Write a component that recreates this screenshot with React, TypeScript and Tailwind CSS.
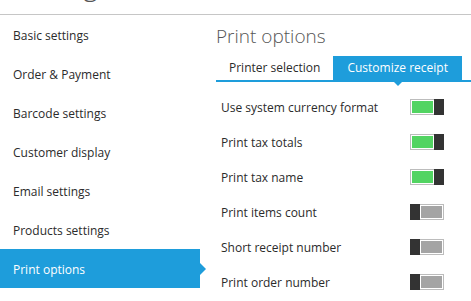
import React from "react";

const menu = [
  "Basic settings",
  "Order & Payment",
  "Barcode settings",
  "Customer display",
  "Email settings",
  "Products settings",
  "Print options",
];

const options = [
  { label: "Use system currency format", on: true },
  { label: "Print tax totals", on: true },
  { label: "Print tax name", on: true },
  { label: "Print items count", on: false },
  { label: "Short receipt number", on: false },
  { label: "Print order number", on: false },
];

function Toggle({ on }: { on: boolean }) {
  if (on) {
    return (
      <div className="flex h-[16px] w-[34px]">
        <div className="flex-1 border border-[#bcbcbc] border-r-0 bg-white p-[1px]">
          <div className="h-full w-full bg-[#52d462]" />
        </div>
        <div className="w-[10px] bg-[#333333]" />
      </div>
    );
  }
  return (
    <div className="flex h-[16px] w-[34px]">
      <div className="w-[10px] bg-[#333333]" />
      <div className="flex-1 border border-[#bcbcbc] border-l-0 bg-white p-[1px]">
        <div className="h-full w-full bg-[#a4a4a4]" />
      </div>
    </div>
  );
}

export default function App() {
  return (
    <div className="h-[301px] w-[471px] overflow-hidden bg-white text-[#2b2b2b] [font-family:'Open_Sans',sans-serif]">
      {/* Header, mostly scrolled off */}
      <div className="h-[15px] overflow-hidden border-b border-[#c6c6c6]">
        <div className="-mt-[34px] pl-[11px] text-[28px] font-light leading-[36px] text-[#555]">Settings</div>
      </div>

      <div className="flex">
        {/* Sidebar */}
        <div className="w-[200px] shrink-0">
          {menu.map((m) => {
            const active = m === "Print options";
            return (
              <div
                key={m}
                className={
                  active
                    ? "relative flex h-[39px] items-center bg-[#1e9ddb] pl-[13px] pt-[2px] text-[12px] text-white"
                    : "flex h-[39px] items-center pl-[13px] pt-[2px] text-[12px]"
                }
              >
                {m}
                {active && (
                  <div className="absolute right-[-6px] top-1/2 h-0 w-0 -translate-y-1/2 border-y-[6px] border-l-[6px] border-y-transparent border-l-[#1e9ddb]" />
                )}
              </div>
            );
          })}
        </div>

        {/* Content */}
        <div className="min-w-0 flex-1 pl-[16px]">
          <div className="pt-[9px] text-[19px] font-light leading-[24px] text-[#555]">Print options</div>

          <div className="mt-[8px] flex h-[26px] whitespace-nowrap border-b-2 border-[#1e9ddb] text-[12px]">
            <div className="flex items-center px-[13px]">Printer selection</div>
            <div className="relative flex items-center bg-[#1e9ddb] px-[14px] text-white">
              Customize receipt
              <div className="absolute bottom-[-6px] left-1/2 h-0 w-0 -translate-x-1/2 border-x-[4px] border-t-[4px] border-x-transparent border-t-[#1e9ddb]" />
            </div>
          </div>

          <div className="pt-[7px]">
            {options.map((o) => (
              <div key={o.label} className="flex h-[35px] items-center justify-between pl-[5px] pr-[27px] text-[12px]">
                <span className="pt-[2px]">{o.label}</span>
                <Toggle on={o.on} />
              </div>
            ))}
          </div>
        </div>
      </div>
    </div>
  );
}
